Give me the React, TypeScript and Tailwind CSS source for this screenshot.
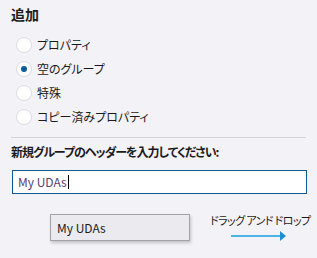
const options = [
  { label: "プロパティ", checked: false },
  { label: "空のグループ", checked: true },
  { label: "特殊", checked: false },
  { label: "コピー済みプロパティ", checked: false },
];

export default function App() {
  return (
    <div className="w-[317px] h-[258px] bg-[#f3f2f7] text-[#1b1b1b] overflow-hidden font-['Noto_Sans_CJK_JP','Noto_Sans',sans-serif] [font-feature-settings:'palt']">
      <div className="px-[11px] pt-[4px]">
        <h2 className="text-[14px] font-bold leading-[20px]">追加</h2>

        <div className="mt-[12px] flex flex-col gap-[6px]">
          {options.map((o) => (
            <label key={o.label} className="flex items-center gap-[5px] pl-[5px] h-[18px]">
              <span className="w-[16px] h-[16px] rounded-full bg-white border border-[#dcdbe2] flex items-center justify-center shrink-0">
                {o.checked && <span className="w-[6px] h-[6px] rounded-full bg-[#0c5a9c]" />}
              </span>
              <span className="text-[12px] leading-[18px]">{o.label}</span>
            </label>
          ))}
        </div>

        <div className="mt-[11px] h-px bg-[#d6d5db] w-[295px]" />

        <p className="mt-[5px] text-[12px] font-bold leading-[18px] tracking-[-1px]">
          新規グループのヘッダーを入力してください:
        </p>

        <div className="mt-[9px] ml-[1px] w-[295px] h-[24px] bg-white border-[1.5px] border-[#0e5a95] flex items-center px-[5px]">
          <span className="text-[12px] text-[#5a3d72] [font-feature-settings:normal]">My UDAs</span>
          <span className="w-px h-[14px] bg-black ml-[1px]" />
        </div>

        <div className="mt-[20px] flex items-start">
          <div className="ml-[39px] w-[140px] shrink-0 h-[27px] bg-[#ebeaef] border border-[#a3a2a8] shadow-[1px_2px_3px_rgba(0,0,0,0.2)] flex items-center px-[6px]">
            <span className="text-[12px] text-[#1b1b1b]">My UDAs</span>
          </div>
          <div className="ml-[20px] -mt-[2px] flex flex-col shrink-0">
            <span className="text-[11px] leading-[16px] whitespace-nowrap tracking-[-0.6px] text-[#1b1b1b]">ドラッグ アンド ドロップ</span>
            <svg width="58" height="10" viewBox="0 0 58 10" className="ml-[21px] mt-[3px]">
              <line x1="0" y1="5" x2="50" y2="5" stroke="#4bb4e6" strokeWidth="2" />
              <polygon points="49,0 55,5 49,10" fill="#1a8fd1" />
            </svg>
          </div>
        </div>
      </div>
    </div>
  );
}
